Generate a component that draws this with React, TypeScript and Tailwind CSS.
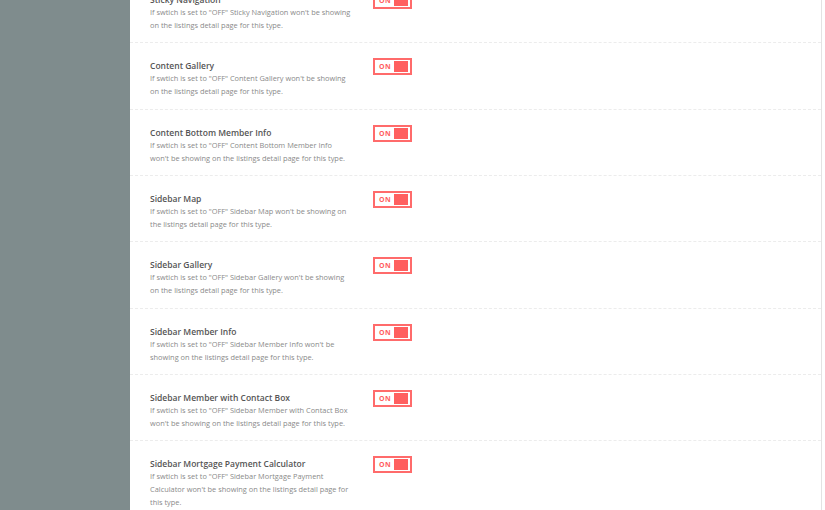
const rows = [
  { title: "Sticky Navigation", lines: ['If swtich is set to "OFF" Sticky Navigation won\'t be showing', "on the listings detail page for this type."] },
  { title: "Content Gallery", lines: ['If swtich is set to "OFF" Content Gallery won\'t be showing', "on the listings detail page for this type."] },
  { title: "Content Bottom Member Info", lines: ['If swtich is set to "OFF" Content Bottom Member Info', "won't be showing on the listings detail page for this type."] },
  { title: "Sidebar Map", lines: ['If swtich is set to "OFF" Sidebar Map won\'t be showing on', "the listings detail page for this type."] },
  { title: "Sidebar Gallery", lines: ['If swtich is set to "OFF" Sidebar Gallery won\'t be showing', "on the listings detail page for this type."] },
  { title: "Sidebar Member Info", lines: ['If swtich is set to "OFF" Sidebar Member Info won\'t be', "showing on the listings detail page for this type."] },
  { title: "Sidebar Member with Contact Box", lines: ['If swtich is set to "OFF" Sidebar Member with Contact Box', "won't be showing on the listings detail page for this type."] },
  {
    title: "Sidebar Mortgage Payment Calculator",
    lines: ['If swtich is set to "OFF" Sidebar Mortgage Payment', "Calculator won't be showing on the listings detail page for", "this type."],
  },
];

function Toggle() {
  return (
    <div className="mt-[15px] flex h-[17px] w-[39px] items-center justify-between border-2 border-[#ff6b6b] bg-white pl-[4px] pr-[2px]">
      <span className="text-[7px] font-bold leading-none tracking-[0.5px] text-[#ff5f5f]">ON</span>
      <span className="h-[11px] w-[14px] bg-[#ff5f5f]"></span>
    </div>
  );
}

export default function App() {
  return (
    <div className="flex h-[510px] w-[825px] overflow-hidden bg-white font-['Open_Sans',sans-serif]">
      {/* 左のサイドバー */}
      <aside className="w-[130px] shrink-0 bg-[#7f8c8d]"></aside>

      <main className="w-[692px] shrink-0 border-r border-[#e3e3e3]">
        <div className="-mt-[23px]">
          {rows.map((r) => (
            <div key={r.title} className="flex border-b border-dashed border-[#ececec] pl-[20px]">
              <div className="w-[206px] pt-[17px] pb-[10.33px]">
                <div className="text-[8.5px] font-semibold leading-[12px] text-[#555]">{r.title}</div>
                <div className="whitespace-nowrap text-[7.4px] leading-[13px] text-[#8a8a8a]">
                  {r.lines.map((l) => (
                    <div key={l}>{l}</div>
                  ))}
                </div>
              </div>
              <div className="ml-[17px]">
                <Toggle />
              </div>
            </div>
          ))}
        </div>
      </main>

      <div className="flex-1 bg-white"></div>
    </div>
  );
}
